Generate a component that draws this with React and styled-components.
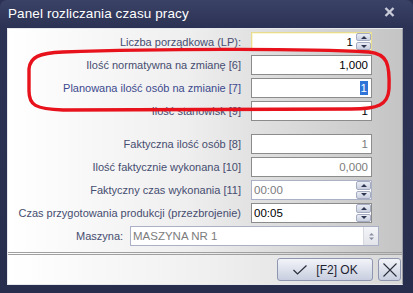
import React from 'react'
import styled, { createGlobalStyle } from 'styled-components'

const Global = createGlobalStyle`
  html, body { margin: 0; padding: 0; background: #2a3153; }
  * { box-sizing: border-box; }
`

const fields = [
  { label: 'Liczba porządkowa (LP):', value: '1', spin: true, focus: true },
  { label: 'Ilość normatywna na zmianę [6]', value: '1,000' },
  { label: 'Planowana ilość osób na zmianie [7]', value: '1', selected: true, active: true },
  { label: 'Ilość stanowisk [9]', value: '1' },
  { label: 'Faktyczna ilość osób [8]', value: '1', dim: true, gapTop: true },
  { label: 'Ilość faktycznie wykonana [10]', value: '0,000', dim: true },
  { label: 'Faktyczny czas wykonania [11]', value: '00:00', dim: true, left: true, spin: true, disabled: true },
  { label: 'Czas przygotowania produkcji (przezbrojenie)', value: '00:05', left: true, spin: true },
]

const Spinner = ({ disabled }) => (
  <SpinBox>
    <SpinBtn $disabled={disabled}><Tri $up /></SpinBtn>
    <SpinBtn $disabled={disabled}><Tri /></SpinBtn>
  </SpinBox>
)

const App = () => {
  return (
    <>
      <Global />
      <Window>
        <TitleBar>
          <Title>Panel rozliczania czasu pracy</Title>
          <CloseGlyph>
            <svg width="11" height="10" viewBox="0 0 11 10">
              <path d="M1.5 1 L9.5 9 M9.5 1 L1.5 9" stroke="#c9ccd8" strokeWidth="2.4" />
            </svg>
          </CloseGlyph>
        </TitleBar>
        <Client>
          <FormPanel>
            <Grid>
              {fields.map((f) => (
                <React.Fragment key={f.label}>
                  <Label $active={f.active} $gapTop={f.gapTop}>{f.label}</Label>
                  <Field $focus={f.focus} $disabled={f.disabled} $gapTop={f.gapTop} $short={f.spin && f.focus}>
                    <Value $dim={f.dim} $left={f.left}>
                      {f.selected ? <Sel>{f.value}</Sel> : f.value}
                    </Value>
                    {f.spin && <Spinner disabled={f.disabled} />}
                  </Field>
                </React.Fragment>
              ))}
            </Grid>
            <MachineRow>
              <Label>Maszyna:</Label>
              <Combo>
                <Value $dim $left>MASZYNA NR 1</Value>
                <ComboBtn>
                  <svg width="7" height="9" viewBox="0 0 7 9">
                    <path d="M3.5 1 L6 3.5 H1 Z M1 5.5 H6 L3.5 8 Z" fill="#8a90a4" />
                  </svg>
                </ComboBtn>
              </Combo>
            </MachineRow>
            <Ring width="413" height="293" viewBox="0 0 413 293">
              <path
                d="M62 51 C150 48 300 47 368 51 C386 53 389 62 388 88 C387 104 377 108 350 108 L62 109 C34 108 28 104 28 90 L28 68 C29 56 38 52 62 51 Z"
                fill="none" stroke="#e8121c" strokeWidth="3.4"
              />
            </Ring>
          </FormPanel>
          <Footer>
            <OkButton>
              <svg width="16" height="12" viewBox="0 0 16 12">
                <path d="M1.5 6 L5.5 10 L14.5 1.5" fill="none" stroke="#2b2f3d" strokeWidth="1.2" />
              </svg>
              <span>[F2] OK</span>
            </OkButton>
            <XButton>
              <svg width="16" height="16" viewBox="0 0 16 16">
                <path d="M1.5 1.5 L14.5 14.5 M14.5 1.5 L1.5 14.5" stroke="#2b2f3d" strokeWidth="1.1" />
              </svg>
            </XButton>
          </Footer>
        </Client>
      </Window>
    </>
  )
}

const Window = styled.div`
  width: 413px;
  height: 293px;
  background: linear-gradient(180deg, #3a4266 0px, #2b3254 28px, #272e4d 100%);
  border-radius: 7px 7px 0 0;
  display: flex;
  flex-direction: column;
  font-family: 'Liberation Sans', Arial, sans-serif;
  overflow: hidden;
`

const TitleBar = styled.div`
  height: 28px;
  display: flex;
  align-items: center;
  justify-content: space-between;
  padding: 0 18px 2px 8px;
`

const Title = styled.div`
  color: #ffffff;
  font-size: 13.5px;
  letter-spacing: 0.1px;
`

const CloseGlyph = styled.div`
  display: flex;
  margin-top: -2px;
`

const Client = styled.div`
  margin: 0 10px 8px 7px;
  flex: 1;
  display: flex;
  flex-direction: column;
  border: 1px solid #e6e8ee;
  border-right-color: #9a9ca4;
`

const FormPanel = styled.div`
  position: relative;
  flex: 1;
  padding: 3px 0 0 0;
  background: linear-gradient(90deg, #ffffff 0%, #efefef 45%, #c4c4c4 100%);
  border-bottom: 3px double #a0a0a0;
`

const Grid = styled.div`
  display: grid;
  grid-template-columns: 233px 121px;
  column-gap: 10px;
  row-gap: 3px;
  align-items: center;
`

const Label = styled.div`
  text-align: right;
  font-size: 11px;
  color: ${(p) => (p.$active ? '#3c4a8e' : '#464d70')};
  white-space: nowrap;
  margin-top: ${(p) => (p.$gapTop ? '10px' : '0')};
`

const Field = styled.div`
  height: 20px;
  display: flex;
  align-items: stretch;
  background: #fff;
  border: 1px solid ${(p) => (p.$focus ? '#e8dc8e' : p.$disabled ? '#aab0c6' : '#8c8c8c')};
  box-shadow: ${(p) => (p.$focus ? 'inset 0 0 0 1px #fbf6d6' : 'none')};
  margin-top: ${(p) => (p.$gapTop ? '10px' : '0')};
  ${(p) => p.$short && 'height: 19px; margin-bottom: 1px;'}
`

const Value = styled.div`
  flex: 1;
  display: flex;
  align-items: center;
  justify-content: ${(p) => (p.$left ? 'flex-start' : 'flex-end')};
  padding: 0 ${(p) => (p.$left ? '2px' : '3px')};
  font-size: 11.5px;
  color: ${(p) => (p.$dim ? '#7c7c7c' : '#000')};
`

const Sel = styled.span`
  background: #3074d8;
  color: #fff;
  padding: 0 1px;
  line-height: 14px;
`

const SpinBox = styled.div`
  width: 15px;
  display: flex;
  flex-direction: column;
  gap: 1px;
`

const SpinBtn = styled.div`
  flex: 1;
  display: flex;
  align-items: center;
  justify-content: center;
  border: 1px solid #a5acc2;
  border-radius: 2px;
  background: linear-gradient(180deg, #e9ecf4 0%, #c9cfdf 100%);
`

const Tri = styled.div`
  width: 0;
  height: 0;
  border-left: 3.5px solid transparent;
  border-right: 3.5px solid transparent;
  ${(p) => (p.$up ? 'border-bottom: 3px solid #2e3550;' : 'border-top: 3px solid #2e3550;')}
`

const MachineRow = styled.div`
  display: flex;
  align-items: center;
  gap: 8px;
  margin-top: 3px;
  padding-left: 68px;
  ${Label} { width: 46px; }
`

const Combo = styled.div`
  width: 249px;
  height: 20px;
  display: flex;
  background: #fff;
  border: 1px solid #aab0c6;
`

const ComboBtn = styled.div`
  width: 15px;
  display: flex;
  align-items: center;
  justify-content: center;
  border-left: 1px solid #d6d9e2;
  background: linear-gradient(180deg, #f4f5f8 0%, #e2e4ea 100%);
`

const Ring = styled.svg`
  position: absolute;
  left: -7px;
  top: -28px;
  pointer-events: none;
`

const Footer = styled.div`
  height: 29px;
  display: flex;
  align-items: center;
  justify-content: flex-end;
  gap: 5px;
  padding-right: 1px;
  background: linear-gradient(90deg, #ffffff 0%, #f0f0f0 50%, #d9d9d9 100%);
`

const ButtonBase = styled.div`
  height: 23px;
  display: flex;
  align-items: center;
  justify-content: center;
  border: 1px solid #8e96b0;
  border-radius: 3px;
  background: linear-gradient(180deg, #f3f4f9 0%, #dde1ec 50%, #c8cedf 100%);
  color: #1e2230;
  font-size: 12px;
`

const OkButton = styled(ButtonBase)`
  width: 96px;
  gap: 8px;
`

const XButton = styled(ButtonBase)`
  width: 23px;
`

export default App
